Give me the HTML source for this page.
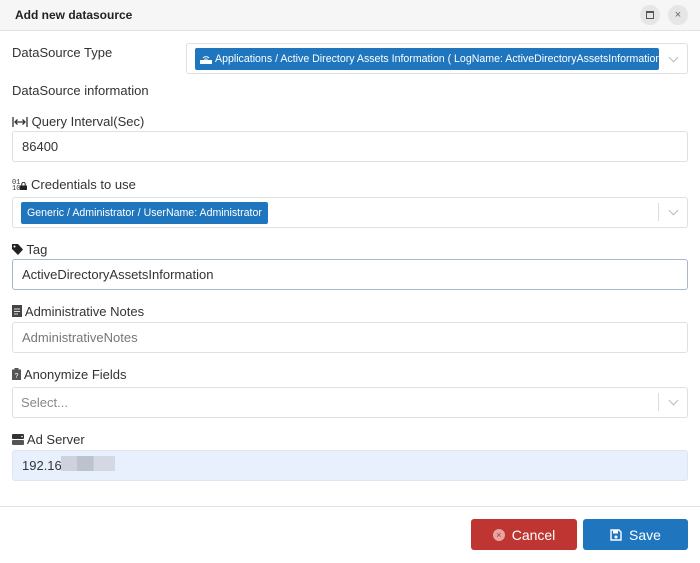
<!DOCTYPE html>
<html><head><meta charset="utf-8"><style>
*{box-sizing:border-box;margin:0;padding:0}
body{width:700px;height:563px;background:#fff;font-family:"Liberation Sans",sans-serif;color:#333;position:relative;overflow:hidden;font-size:13px}
.a{position:absolute}
.hdr{left:0;top:0;width:700px;height:31px;background:#f6f6f6;border-bottom:1px solid #e2e2e8}
.lbl{left:12px;font-size:13px;color:#333;white-space:nowrap}
.box{left:12px;width:676px;height:31px;border:1px solid #dde0e4;border-radius:3px;background:#fff}
.txt{left:22px;font-size:13px;white-space:nowrap}
.chip{background:#1f76bf;color:#fff;border-radius:2px;font-size:10.6px;white-space:nowrap;overflow:hidden;padding-left:6px;line-height:22px;height:22px}
.sep{width:1px;height:18px;background:#ddd}
.chev{width:7px;height:7px;border-right:1.3px solid #bbb;border-bottom:1.3px solid #bbb;transform:rotate(45deg)}
.btn{height:31px;border-radius:3px;color:#fff;font-size:14px;display:flex;align-items:center;justify-content:center}
</style></head><body>
<div class="a hdr"></div>
<div class="a" style="left:15px;top:8px;font-size:12px;font-weight:bold;color:#222">Add new datasource</div>
<div class="a" style="left:640px;top:5px;width:20px;height:20px;border-radius:50%;background:#e6e6e6"></div>
<div class="a" style="left:646px;top:11px;width:8px;height:8px;border:1px solid #555;border-top-width:2px"></div>
<div class="a" style="left:668px;top:5px;width:20px;height:20px;border-radius:50%;background:#e6e6e6;text-align:center;line-height:20px;font-size:11px;color:#666">×</div>

<div class="a lbl" style="top:45px">DataSource Type</div>
<div class="a box" style="left:186px;width:502px;top:43px"></div>
<div class="a chip" style="left:195px;top:48px;width:464px;padding-left:20px">Applications / Active Directory Assets Information ( LogName: ActiveDirectoryAssetsInformation )</div>
<div class="a" style="left:200px;top:53px;width:12px;height:12px"><svg width="12" height="12"><rect x="0" y="7" width="12" height="4" fill="#fff"/><path d="M3 5a4 4 0 0 1 6 0M4.5 6.5a2 2 0 0 1 3 0" stroke="#fff" fill="none"/></svg></div>
<div class="a chev" style="left:670px;top:54px"></div>
<div class="a lbl" style="top:83px">DataSource information</div>

<div class="a lbl" style="top:114px"><svg width="16" height="10" style="vertical-align:-1px"><path d="M1 0v10M15 0v10M3 5h10M5.5 2.5L3 5l2.5 2.5M10.5 2.5L13 5l-2.5 2.5" stroke="#333" stroke-width="1.3" fill="none"/></svg> Query Interval(Sec)</div>
<div class="a box" style="top:131px"></div>
<div class="a txt" style="top:139px">86400</div>

<div class="a lbl" style="top:177px"><span style="font-size:7px;line-height:6px;display:inline-block;vertical-align:middle;font-family:'Liberation Mono',monospace">01<br>10</span><svg width="7" height="8" style="vertical-align:-1px"><rect y="3.5" width="7" height="4.5" fill="#222"/><path d="M1.8 3.5V2a1.7 1.7 0 0 1 3.4 0v1.5" stroke="#222" fill="none"/></svg><span style="font-size:13px"> Credentials to use</span></div>
<div class="a box" style="top:197px"></div>
<div class="a chip" style="left:21px;top:202px;width:247px">Generic / Administrator / UserName: Administrator</div>
<div class="a sep" style="left:658px;top:203px"></div>
<div class="a chev" style="left:670px;top:207px"></div>

<div class="a lbl" style="top:242px"><svg width="11" height="11" style="vertical-align:-1px"><path d="M0 0h6l5 5.5-5 5.5-6-6z" fill="#222"/><circle cx="2.5" cy="2.5" r="1" fill="#fff"/></svg> Tag</div>
<div class="a box" style="top:259px;border-color:#a9b6cf"></div>
<div class="a txt" style="top:267px">ActiveDirectoryAssetsInformation</div>

<div class="a lbl" style="top:304px"><svg width="10" height="12" style="vertical-align:-1px"><rect width="10" height="12" fill="#444"/><path d="M2 4h6M2 6.5h6M2 9h4" stroke="#ddd"/></svg> Administrative Notes</div>
<div class="a box" style="top:322px"></div>
<div class="a txt" style="top:330px;color:#777">AdministrativeNotes</div>

<div class="a lbl" style="top:367px"><svg width="9" height="12" style="vertical-align:-1px"><rect y="1.5" width="9" height="10.5" fill="#555"/><rect x="2.5" y="0" width="4" height="3" fill="#555"/><text x="4.5" y="10" font-size="7" fill="#fff" text-anchor="middle" font-family="Liberation Sans">?</text></svg> Anonymize Fields</div>
<div class="a box" style="top:387px"></div>
<div class="a txt" style="left:21px;top:395px;color:#888">Select...</div>
<div class="a sep" style="left:658px;top:393px"></div>
<div class="a chev" style="left:670px;top:397px"></div>

<div class="a lbl" style="top:432px"><svg width="12" height="11" style="vertical-align:-1px"><rect width="12" height="5" rx="1" fill="#333"/><rect y="6" width="12" height="5" rx="1" fill="#555"/><circle cx="10" cy="2.5" r=".8" fill="#fff"/></svg> Ad Server</div>
<div class="a box" style="top:450px;background:#e8f0fe;border-color:#dfe5ef"></div>
<div class="a txt" style="top:458px">192.16</div>
<div class="a" style="left:61px;top:456px;width:54px;height:15px;background:linear-gradient(90deg,#cdd2dc 0 30%,#bcc2ce 30% 60%,#d3d8e2 60%)"></div>

<div class="a" style="left:0;top:506px;width:700px;height:1px;background:#e3e3e3"></div>
<div class="a btn" style="left:471px;top:519px;width:106px;background:#bf3532"><span style="display:inline-block;width:12px;height:12px;border-radius:50%;background:#e6a5a3;color:#bf3532;font-size:9px;line-height:12px;text-align:center;margin-right:7px">×</span>Cancel</div>
<div class="a btn" style="left:583px;top:519px;width:105px;background:#1f76bf"><svg width="12" height="12" style="margin-right:7px"><path d="M1 1h8l2 2v8H1z" fill="none" stroke="#fff" stroke-width="1.4"/><rect x="3" y="1.5" width="5" height="3" fill="#fff"/><circle cx="6" cy="8" r="1.5" fill="#fff"/></svg>Save</div>
</body></html>
